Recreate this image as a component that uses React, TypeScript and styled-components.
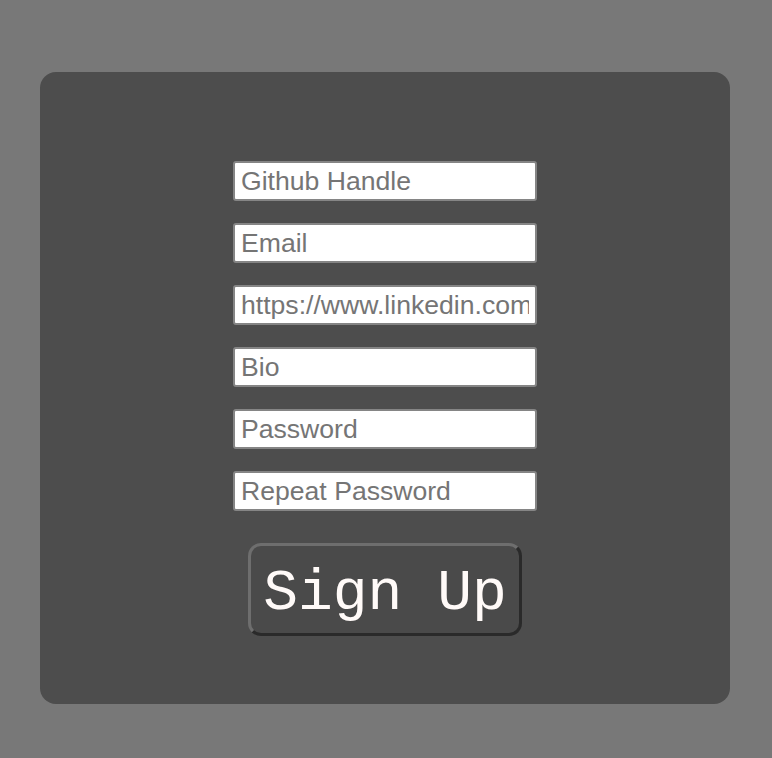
import React from "react";
import styled, { createGlobalStyle } from "styled-components";

const Global = createGlobalStyle`
  html, body { margin: 0; padding: 0; background: #787878; }
  body { font-family: "Liberation Sans", Arial, sans-serif; }
`;

const Page = styled.div`
  padding: 72px 42px 54px 40px;
`;

const Card = styled.form`
  background: #4d4d4d;
  border-radius: 16px;
  height: 632px;
  box-sizing: border-box;
  padding-top: 89px;
  display: flex;
  flex-direction: column;
  align-items: center;
`;

const Fields = styled.div`
  display: flex;
  flex-direction: column;
  gap: 22px;
`;

const Input = styled.input`
  width: 304px;
  height: 40px;
  box-sizing: border-box;
  border: 2px solid #858585;
  border-radius: 3px;
  background: #fff;
  padding: 2px 6px;
  font-family: "Liberation Sans", Arial, sans-serif;
  font-size: 26.6px;
  color: #333;
  outline: none;
  &::placeholder { color: #757575; opacity: 1; }
`;

const Button = styled.button`
  margin-top: 32px;
  width: 274px;
  height: 93px;
  box-sizing: border-box;
  background: #4a4a4a;
  border: 3px solid;
  border-color: #6e6e6e #2a2a2a #2a2a2a #6e6e6e;
  border-radius: 13px;
  color: #fffaf8;
  font-family: "Liberation Mono", "Courier New", monospace;
  font-size: 58px;
  padding: 8px 0 0;
  cursor: pointer;
`;

export default function App() {
  return (
    <>
      <Global />
      <Page>
        <Card onSubmit={(e) => e.preventDefault()}>
          <Fields>
            <Input placeholder="Github Handle" />
            <Input placeholder="Email" />
            <Input placeholder="https://www.linkedin.com" />
            <Input placeholder="Bio" />
            <Input type="password" placeholder="Password" />
            <Input type="password" placeholder="Repeat Password" />
          </Fields>
          <Button type="submit">Sign Up</Button>
        </Card>
      </Page>
    </>
  );
}
